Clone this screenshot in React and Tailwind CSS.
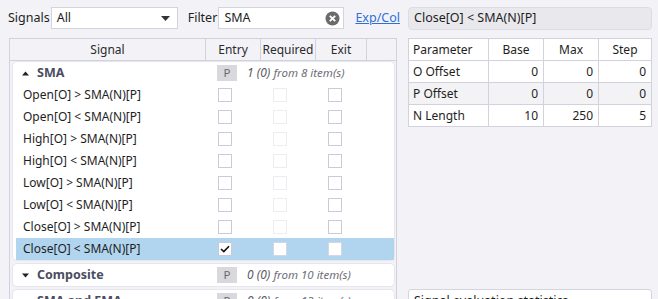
import React from "react";

const font = { fontFamily: '"Noto Sans", "Open Sans", sans-serif' };

function Check({ state }) {
  if (state === "checked") {
    return (
      <div className="w-[14px] h-[14px] bg-white border border-[#c9c9d8] flex items-center justify-center">
        <svg width="10" height="8" viewBox="0 0 10 8">
          <path d="M1 4 L3.8 6.6 L9 1.2" fill="none" stroke="#111" strokeWidth="1.6" />
        </svg>
      </div>
    );
  }
  if (state === "white") {
    return <div className="w-[14px] h-[14px] bg-white border border-[#d6d6e2]" />;
  }
  if (state === "faded") {
    return <div className="w-[14px] h-[14px] border border-[#ececf1]" />;
  }
  return <div className="w-[14px] h-[14px] border border-[#cacad8]" />;
}

function Row({ label, selected }) {
  return (
    <div className={"flex h-[22px] items-center " + (selected ? "bg-[#b1d5ee] ml-[3px]" : "")}>
      <div className={"text-[12px] text-[#1e1e1e] whitespace-nowrap " + (selected ? "w-[190px] pl-[7px]" : "w-[193px] pl-[10px]")}>{label}</div>
      <div className="w-[55px] flex pl-[12px]"><Check state={selected ? "checked" : "normal"} /></div>
      <div className="w-[55px] flex pl-[12px]"><Check state={selected ? "white" : "faded"} /></div>
      <div className="w-[51px] flex pl-[12px]"><Check state={selected ? "white" : "normal"} /></div>
      <div className="flex-1" />
    </div>
  );
}

function GroupHeader({ name, count, total, expanded }) {
  return (
    <div className="flex h-[22px] items-center">
      <div className="w-[193px] flex items-center pl-[9px]">
        <svg width="7" height="5" viewBox="0 0 7 5" className="mr-[8px]">
          {expanded ? <path d="M0 4.5 L3.5 0.5 L7 4.5Z" fill="#222" /> : <path d="M0 0.5 L3.5 4.5 L7 0.5Z" fill="#222" />}
        </svg>
        <span className="text-[12.5px] font-bold text-[#4a4d5e] whitespace-nowrap">{name}</span>
      </div>
      <div className="flex items-center pl-[11px]">
        <div className="w-[20px] h-[16px] bg-[#d8d8dd] text-[#6a6a72] text-[11.5px] flex items-center justify-center">P</div>
        <div className="ml-[10px] text-[12px] italic whitespace-nowrap">
          <span className="text-[#5a5a62]">{count} </span>
          <span className="text-[#6e6e78] text-[11.5px]">from {total} item(s)</span>
        </div>
      </div>
    </div>
  );
}

export default function App() {
  const rows = [
    "Open[O] > SMA(N)[P]",
    "Open[O] < SMA(N)[P]",
    "High[O] > SMA(N)[P]",
    "High[O] < SMA(N)[P]",
    "Low[O] > SMA(N)[P]",
    "Low[O] < SMA(N)[P]",
    "Close[O] > SMA(N)[P]",
    "Close[O] < SMA(N)[P]",
  ];
  const params = [
    ["O Offset", "0", "0", "0"],
    ["P Offset", "0", "0", "0"],
    ["N Length", "10", "250", "5"],
  ];
  return (
    <div className="w-[658px] h-[299px] overflow-hidden bg-[#f3f3f7] flex text-[#1e1e1e]" style={font}>
      <div className="w-[400px] flex flex-col pt-[7px]">
        <div className="flex items-center h-[22px] text-[12.5px]">
          <span className="ml-[8px] w-[43px]">Signals</span>
          <div className="w-[128px] h-[22px] bg-white border border-[#d4d4df] flex items-center pl-[5px] pr-[7px]">
            <span className="flex-1">All</span>
            <svg width="9" height="5" viewBox="0 0 9 5"><path d="M0 0 L9 0 L4.5 5Z" fill="#333" /></svg>
          </div>
          <span className="ml-[10px] w-[31px]">Filter</span>
          <div className="w-[127px] h-[22px] bg-white border border-[#d4d4df] flex items-center pl-[5px] pr-[3px]">
            <span className="flex-1">SMA</span>
            <svg width="15" height="15" viewBox="0 0 15 15">
              <circle cx="7.5" cy="7.5" r="7" fill="#6b6b6b" />
              <path d="M4.8 4.8 L10.2 10.2 M10.2 4.8 L4.8 10.2" stroke="#fff" strokeWidth="1.8" />
            </svg>
          </div>
          <span className="ml-[11px] text-[#2f6fd6] underline">Exp/Col</span>
        </div>

        <div className="ml-[9px] mt-[9px] w-[388px] flex-1 border-l border-t border-r border-[#d2d2de] flex flex-col">
          <div className="flex h-[22px] border-b border-[#d2d2de] text-[12px] text-[#2a2a2a]">
            <div className="w-[196px] flex items-center justify-center border-r border-[#d2d2de]">Signal</div>
            <div className="w-[55px] flex items-center justify-center border-r border-[#d2d2de]">Entry</div>
            <div className="w-[55px] flex items-center justify-center border-r border-[#d2d2de]">Required</div>
            <div className="w-[51px] flex items-center justify-center border-r border-[#d2d2de]">Exit</div>
            <div className="flex-1" />
          </div>
          <div className="flex flex-col gap-[2px] pl-[2px] pr-[1px]">
            <div className="bg-white border border-[#e6e6ee] rounded-[5px]">
              <GroupHeader name="SMA" count="1 (0)" total="8" expanded />
              {rows.map((r, i) => (
                <Row key={r} label={r} selected={i === rows.length - 1} />
              ))}
            </div>
            <div className="bg-white border border-[#e6e6ee] rounded-[5px]">
              <GroupHeader name="Composite" count="0 (0)" total="10" />
            </div>
            <div className="bg-white border border-[#e6e6ee] rounded-[5px]">
              <GroupHeader name="SMA and EMA" count="0 (0)" total="12" />
            </div>
          </div>
        </div>
      </div>

      <div className="flex-1 flex flex-col pt-[7px] pl-[8px] pr-[6px]">
        <div className="h-[23px] bg-[#e9e9ed] border border-[#dcdce4] rounded-[4px] flex items-center pl-[5px] text-[12.5px]">
          Close[O] &lt; SMA(N)[P]
        </div>
        <table className="mt-[8px] w-[244px] border-collapse text-[12px] bg-white">
          <thead>
            <tr className="h-[22px]">
              <th className="w-[80px] border border-[#d2d2de] font-normal text-left pl-[4px]">Parameter</th>
              <th className="w-[55px] border border-[#d2d2de] font-normal text-center">Base</th>
              <th className="w-[55px] border border-[#d2d2de] font-normal text-center">Max</th>
              <th className="border border-[#d2d2de] font-normal text-center">Step</th>
            </tr>
          </thead>
          <tbody>
            {params.map((p, i) => (
              <tr key={p[0]} className={"h-[22px] " + (i === 1 ? "bg-[#f3f3f6]" : "bg-white")}>
                <td className="border border-[#d2d2de] pl-[4px]">{p[0]}</td>
                <td className="border border-[#d2d2de] text-right pr-[5px]">{p[1]}</td>
                <td className="border border-[#d2d2de] text-right pr-[5px]">{p[2]}</td>
                <td className="border border-[#d2d2de] text-right pr-[5px]">{p[3]}</td>
              </tr>
            ))}
          </tbody>
        </table>
        <div className="flex-1" />
        <div className="h-[22px] -mb-[12px] bg-white border border-[#d4d4df] rounded-[3px] pl-[5px] pt-[2px] text-[12.5px] whitespace-nowrap">
          Signal evaluation statistics
        </div>
      </div>
    </div>
  );
}
